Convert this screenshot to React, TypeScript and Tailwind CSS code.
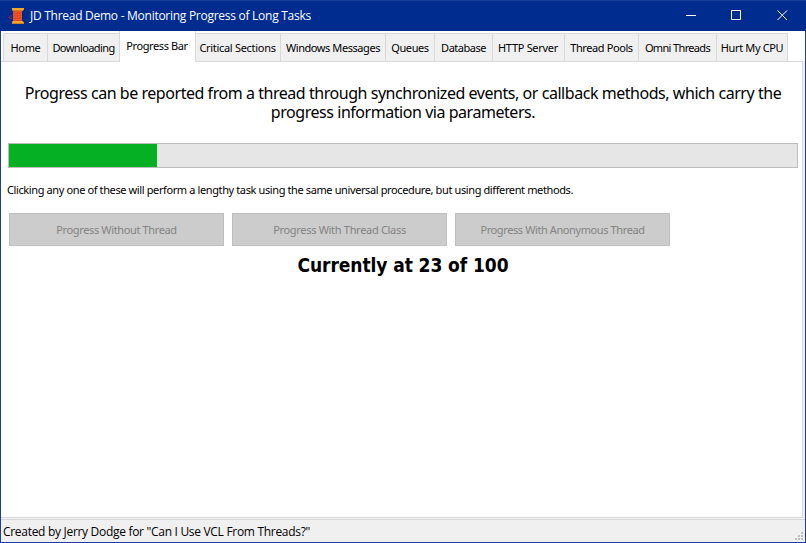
import React from "react";

const TABS = [
  { label: "Home", box: "w-[45px]", text: "tracking-[-0.35px]" },
  { label: "Downloading", box: "w-[71px]", text: "tracking-[-0.6px]" },
  { label: "Progress Bar", box: "w-[77px] pr-px", text: "tracking-[-0.4px]", active: true },
  { label: "Critical Sections", box: "w-[85px] pr-px", text: "tracking-[-0.3px]" },
  { label: "Windows Messages", box: "w-[105px]", text: "tracking-[-0.43px]" },
  { label: "Queues", box: "w-[49px]", text: "tracking-[-0.4px]" },
  { label: "Database", box: "w-[58px]", text: "tracking-[-0.5px]" },
  { label: "HTTP Server", box: "w-[72px] pr-px", text: "tracking-[-0.3px]" },
  { label: "Thread Pools", box: "w-[74px]", text: "tracking-[-0.4px]" },
  { label: "Omni Threads", box: "w-[78px]", text: "tracking-[-0.65px]" },
  { label: "Hurt My CPU", box: "w-[71px]", text: "tracking-[-0.35px]" },
];

function SpoolIcon() {
  return (
    <svg width="16" height="16" viewBox="0 0 16 16" className="shrink-0">
      <path d="M4 10.500H2.500Q1.500 10.500 1.500 9.300T2.500 8H4" fill="none" stroke="#9c3040" strokeWidth="1" />
      <path d="M5 2h9v12H5z" fill="#e8431f" />
      <path d="M5 4.500l9-1M5 7l9-1M5 9.500l9-1M5 12l9-1" stroke="#f4652e" strokeWidth=".7" />
      <path d="M4 0h12v1.500L14.500 3h-10L4 1.500zM4.500 13h10L16 14.500V16H4v-1.500z" fill="#f3a52c" />
      <path d="M5 2.500h9M4 15.500h12" stroke="#c9741f" strokeWidth=".8" />
    </svg>
  );
}

function TitleBar() {
  return (
    <header className="flex h-[31px] shrink-0 items-center border-t border-[#1a3d99] bg-[#002b8f] text-white">
      <div className="flex items-center gap-[6px] pl-[8px]">
        <SpoolIcon />
        <span className="whitespace-nowrap font-['Open_Sans',sans-serif] text-[12px] leading-4 tracking-[-0.27px]">
          JD Thread Demo - Monitoring Progress of Long Tasks
        </span>
      </div>
      <svg width="138" height="30" viewBox="0 0 138 30" className="ml-auto" fill="none" stroke="#fff">
        <path d="M18 14.500h10" />
        <path d="M63.500 9.500h9v9h-9z" />
        <path d="M109.500 9.500l9.500 9.500M119 9.500l-9.500 9.500" />
      </svg>
    </header>
  );
}

const BUTTONS = [
  { label: "Progress Without Thread", text: "tracking-[-0.36px]" },
  { label: "Progress With Thread Class", text: "tracking-[-0.31px]" },
  { label: "Progress With Anonymous Thread", text: "tracking-[-0.4px]" },
];

export default function App() {
  return (
    <div className="flex h-[543px] w-[806px] flex-col overflow-hidden bg-white font-['Noto_Sans',sans-serif] text-[11px] text-black">
      <TitleBar />
      <div className="flex min-h-0 flex-1 flex-col border-x border-b border-[#1c3f9c]">
        <nav className="relative z-10 -mb-px flex h-[31px] shrink-0 items-end pl-[2px]">
          {TABS.map((t, i) => (
            <div
              key={t.label}
              className={`flex shrink-0 items-center justify-center whitespace-nowrap border-[#d9d9d9] ${t.box} ${t.text} ${
                t.active
                  ? "h-[31px] border-x bg-white"
                  : `h-[29px] border-y bg-[#f0f0f0] pt-px ${i === 1 ? "" : "border-r"} ${i === 0 ? "border-l" : ""}`
              }`}
            >
              {t.label}
            </div>
          ))}
        </nav>
        <div className="flex min-h-0 flex-1 border-r-2 border-[#f0f0f0]">
          <main className="flex min-w-0 flex-1 flex-col border border-l-0 border-[#d9d9d9] pl-[7px] pr-[4px]">
            <p className="pt-[22px] text-center text-[16px] leading-[19px] tracking-[-0.455px]">
              Progress can be reported from a thread through synchronized events, or callback methods, which carry the
              progress information via parameters.
            </p>
            <div className="mt-[21px] h-[25px] w-[790px] shrink-0 border border-[#bcbcbc] bg-[#e6e6e6]">
              <div className="h-full w-[148px] bg-[#06b025]" />
            </div>
            <p className="-ml-px mt-[14px] whitespace-nowrap leading-4 tracking-[-0.385px]">
              Clicking any one of these will perform a lengthy task using the same universal procedure, but using different methods.
            </p>
            <div className="mt-[15px] flex gap-[8px] pl-px">
              {BUTTONS.map((b) => (
                <button
                  key={b.label}
                  disabled
                  className={`h-[33px] w-[215px] whitespace-nowrap border border-[#bfbfbf] bg-[#cccccc] pt-[2px] text-[#838383] ${b.text}`}
                >
                  {b.label}
                </button>
              ))}
            </div>
            <p className="mt-[7px] whitespace-nowrap text-center font-['DejaVu_Sans_Condensed','DejaVu_Sans',sans-serif] text-[19px] font-bold leading-6 tracking-[-0.08px]">
              Currently at 23 of 100
            </p>
          </main>
        </div>
        <footer className="flex h-[24px] shrink-0 items-end justify-between border-t border-[#f0f0f0] bg-[#f0f0f0]">
          <div className="flex h-[23px] w-full items-center justify-between border-t border-[#d7d7d7] pl-[2px] pr-[2px]">
            <span className="whitespace-nowrap pt-[2px] font-['Open_Sans',sans-serif] text-[12px] leading-4 tracking-[-0.3px]">
              Created by Jerry Dodge for "Can I Use VCL From Threads?"
            </span>
            <svg width="8" height="8" viewBox="0 0 8 8" className="mb-[2px] self-end" fill="#bfbfbf">
              <path d="M6 0h2v2H6zM3 3h2v2H3zM6 3h2v2H6zM0 6h2v2H0zM3 6h2v2H3zM6 6h2v2H6z" />
            </svg>
          </div>
        </footer>
      </div>
    </div>
  );
}
